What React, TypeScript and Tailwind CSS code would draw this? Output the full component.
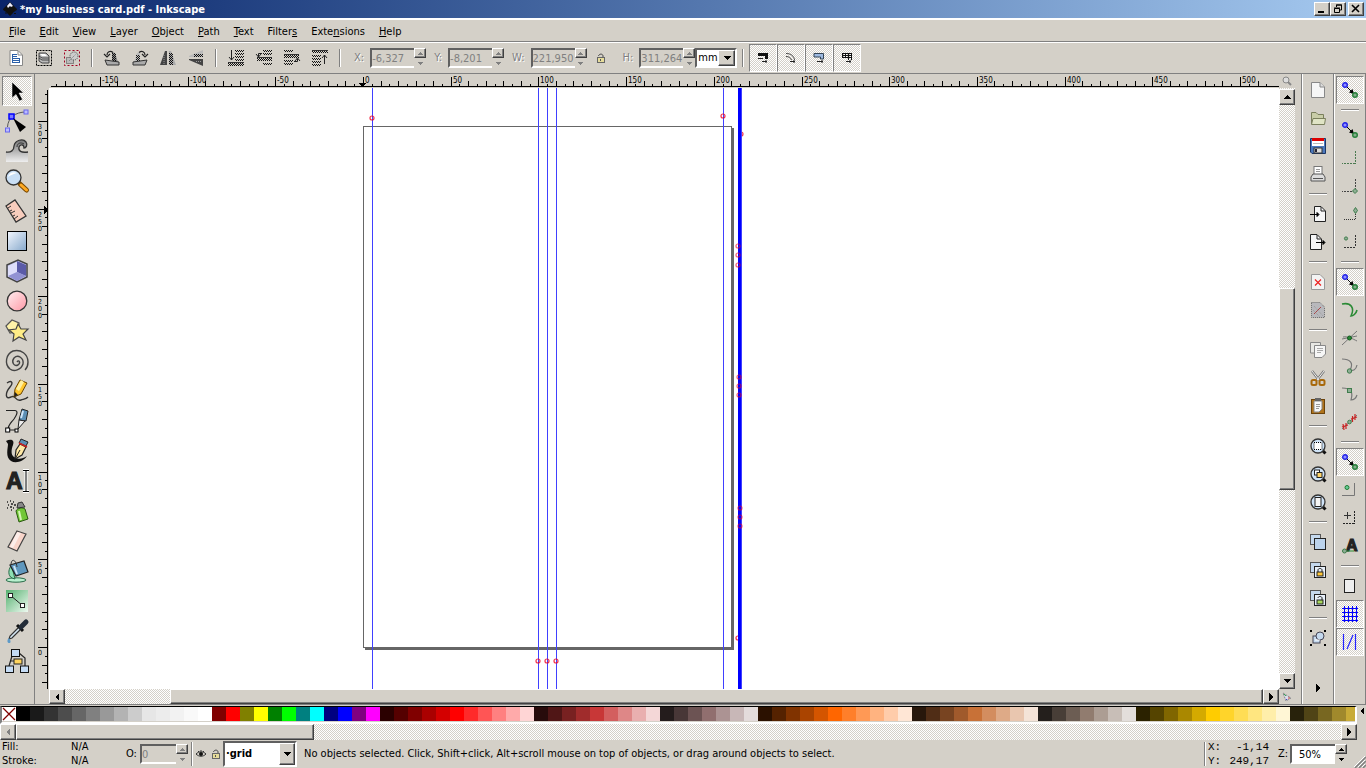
import { type ReactNode } from "react";
import clsx from "clsx";

const dither =
  "bg-[conic-gradient(#fff_25%,#d4d0c8_0_50%,#fff_0_75%,#d4d0c8_0)] bg-[length:2px_2px]";
const raised =
  "border border-t-white border-l-white border-r-[#404040] border-b-[#404040] shadow-[inset_-1px_-1px_#808080] bg-[#d4d0c8]";
const sunken =
  "border-2 border-t-[#606060] border-l-[#606060] border-r-white border-b-white";

const menus = [
  ["", "F", "ile"],
  ["", "E", "dit"],
  ["", "V", "iew"],
  ["", "L", "ayer"],
  ["", "O", "bject"],
  ["", "P", "ath"],
  ["", "T", "ext"],
  ["Filter", "s", ""],
  ["Exte", "n", "sions"],
  ["", "H", "elp"],
];

const palette = (
  "000000 1a1a1a 333333 4d4d4d 666666 808080 999999 b3b3b3 cccccc e6e6e6 ececec f2f2f2 f9f9f9 ffffff " +
  "800000 ff0000 808000 ffff00 008000 00ff00 008080 00ffff 000080 0000ff 800080 ff00ff " +
  "2b0000 550000 800000 aa0000 d40000 ff0000 ff2a2a ff5555 ff8080 ffaaaa ffd5d5 " +
  "280b0b 501616 782121 a02c2c c83737 d35f5f de8787 e9afaf f4d7d7 " +
  "241c1c 483737 6c5353 916f6f ac9393 c8b7b7 e3dbdb " +
  "2b1100 552200 803300 aa4400 d45500 ff6600 ff7f2a ff9955 ffb380 ffccaa ffe6d5 " +
  "28170b 502d16 784421 a05a2c c87137 d38d5f deaa87 e9c6af f4e3d7 " +
  "241f1c 483e37 6c5d53 917c6f ac9d93 c8beb7 e3dedb " +
  "2b2200 554400 806600 aa8800 d4aa00 ffcc00 ffd42a ffdd55 ffe680 ffeeaa fff6d5 " +
  "28220b 504416 786721 a0892c c8ab37"
).split(" ");

type Item = { label: string; icon: ReactNode; on?: boolean } | null;

function Svg({ size = 24, children }: { size?: number; children: ReactNode }) {
  return (
    <svg width={size} height={size} viewBox={`0 0 ${size} ${size}`} fill="none" className="shrink-0 overflow-visible" aria-hidden="true">
      {children}
    </svg>
  );
}

function Arrow({ dir, size = 7, color = "#000" }: { dir: "up" | "down" | "left" | "right"; size?: number; color?: string }) {
  const d = {
    up: "M0 6 L4 2 L8 6Z",
    down: "M0 2 L4 6 L8 2Z",
    left: "M6 0 L2 4 L6 8Z",
    right: "M2 0 L6 4 L2 8Z",
  }[dir];
  return (
    <svg width={size} height={size} viewBox="0 0 8 8" shapeRendering="crispEdges" aria-hidden="true">
      <path d={d} fill={color} />
    </svg>
  );
}

/* ---------- toolbox ---------- */

const toolbox: Item[] = [
  {
    label: "Select",
    on: true,
    icon: <Svg><path d="M7 3 V19 L11 15.500 L14.500 22 L17.500 20.500 L14 14 H18.500Z" fill="#000" stroke="#fff" strokeWidth=".5" /></Svg>,
  },
  {
    label: "Edit nodes",
    icon: (
      <Svg>
        <path d="M2.500 18 C3 9 10 3 21 3" stroke="#555" />
        <rect x="4" y="5" width="5" height="5" fill="#7a7aff" stroke="#00f" strokeWidth="1.500" />
        <rect x="19" y="1" width="4" height="4" fill="#bbf" stroke="#66e" />
        <rect x="0.500" y="19" width="4" height="4" fill="#bbf" stroke="#66e" />
        <path d="M8 9 L21 18 L15 23Z" fill="#000" />
      </Svg>
    ),
  },
  {
    label: "Tweak",
    icon: (
      <Svg>
        <defs>
          <linearGradient id="wave" x1="0" y1="0" x2="0" y2="1"><stop stopColor="#777" /><stop offset="1" stopColor="#eee" /></linearGradient>
        </defs>
        <path d="M1 23 V13 C6 14 9 11 9 7 C10 1 18 -1 21 3 C23 6 21 9 19 9 C19 5 15 5 14 8 C13 12 16 14 23 13 V23Z" fill="url(#wave)" />
        <path d="M1 13 C6 14 9 11 9 7 C10 1 18 -1 21 3 C23 6 21 9 19 9 C19 5 15 5 14 8 C13 12 16 14 23 13" stroke="#333" strokeWidth="1.300" />
        <path d="M12 8 C12 4 16 3 19 5" stroke="#333" />
      </Svg>
    ),
  },
  {
    label: "Zoom",
    icon: (
      <Svg>
        <path d="M15 15 L21.500 21" stroke="#7a4a00" strokeWidth="5" strokeLinecap="round" />
        <path d="M16 16 L21.500 21" stroke="#ffa922" strokeWidth="3" strokeLinecap="round" />
        <circle cx="8.500" cy="8.500" r="7.500" fill="#c9dff5" stroke="#333" strokeWidth="1.300" />
        <path d="M3 8 C4 4 8 2 12 4 C9 5 5 6 3 8Z" fill="#fff" />
      </Svg>
    ),
  },
  {
    label: "Measure",
    icon: (
      <Svg>
        <path d="M1 7 L10 1 L21 17 L11 23Z" fill="#f8cdbd" stroke="#333" strokeWidth="1.300" />
        <path d="M3 9 L6 7 M5 12 L7 11 M6 14 L10 12 M8 17 L10 16 M9 20 L13 17" stroke="#333" />
      </Svg>
    ),
  },
  {
    label: "Rectangle",
    icon: (
      <Svg>
        <defs>
          <linearGradient id="rect" x1="0" y1="0" x2="1" y2="1"><stop stopColor="#f4f8ff" /><stop offset="1" stopColor="#86a8cb" /></linearGradient>
        </defs>
        <rect x="2.500" y="2.500" width="19" height="19" fill="url(#rect)" stroke="#000" />
      </Svg>
    ),
  },
  {
    label: "3D box",
    icon: (
      <Svg>
        <path d="M2 6 L13 1 L22 5 V18 L12 23 L2 18Z" fill="#c5c5f0" stroke="#444" strokeWidth="1.500" />
        <path d="M3 7 L12 3 V13 L3 18Z" fill="#dedefa" />
        <path d="M12 2 L21 6 V17 L12 13Z" fill="#5b5ba8" />
        <path d="M12 13 L21 17 L12 22 L3 17Z" fill="#9292d3" />
      </Svg>
    ),
  },
  {
    label: "Ellipse",
    icon: (
      <Svg>
        <defs>
          <linearGradient id="ell" x1="0" y1="0" x2="1" y2="1"><stop stopColor="#fff0f2" /><stop offset="1" stopColor="#ff98a5" /></linearGradient>
        </defs>
        <circle cx="12" cy="12" r="9.800" fill="url(#ell)" stroke="#333" strokeWidth="1.300" />
      </Svg>
    ),
  },
  {
    label: "Star",
    icon: (
      <Svg>
        <path d="M1 7 L7 1 L14 4 L14 12 L5 14Z" fill="#fff3a8" stroke="#555" strokeWidth="1.200" />
        <path d="M13 5 L16 10 L23 10 L18 15 L21 21 L14 18 L8 22 L9 15 L4 11 L11 10Z" fill="#ffed86" stroke="#444" strokeWidth="1.200" />
      </Svg>
    ),
  },
  {
    label: "Spiral",
    icon: (
      <Svg>
        <path d="M12 13 C14 10 16 14 13 16 C9 18 6 13 9 9 C13 5 19 9 18 15 C16 21 9 23 5 20 C-1 15 1 5 8 2 C16 0 23 5 23 13 C23 18 21 20 20 21" stroke="#444" strokeWidth="1.400" />
      </Svg>
    ),
  },
  {
    label: "Pencil",
    icon: (
      <Svg>
        <path d="M2 4 C6 1 9 3 5 8 C0 14 0 21 6 18 C11 15 10 23 16 21 C19 20 21 20 23 18" stroke="#333" strokeWidth="1.400" />
        <path d="M15 1 L22 4 L16 15 L9 18 L10 10Z" fill="#ffc62e" stroke="#6a4500" />
        <path d="M16 1 L19 3 L14 12 L11 10Z" fill="#fff0a0" />
        <path d="M9 18 L10 13 L13 16Z" fill="#222" />
      </Svg>
    ),
  },
  {
    label: "Bezier",
    icon: (
      <Svg>
        <path d="M1 1.500 H10 C14 2 11 7 9 10 C5 15 3 16 3 21 H11" stroke="#222" strokeWidth="1.200" />
        <path d="M17 0 L23 2 L21 12 L14 11Z" fill="#5c8fb5" stroke="#222" />
        <path d="M18 2 L16 9" stroke="#cfe6fa" strokeWidth="2" />
        <path d="M14 11 L20 12 L13 20Z" fill="#eee" stroke="#222" />
        <rect x=".700" y="19" width="4" height="4" fill="#fff" stroke="#000" />
        <rect x="10" y="20" width="3" height="3" fill="#fff" stroke="#000" />
      </Svg>
    ),
  },
  {
    label: "Calligraphy",
    icon: (
      <Svg>
        <path d="M1 2 C5 0 10 0 8 6 C6 11 6 16 9 18 C14 21 17 20 22 17 C19 22 11 25 6 22 C0 18 3 9 3 5Z" fill="#111" />
        <path d="M16 0 L23 3 L21 7 L14 4Z" fill="#5c8fb5" stroke="#222" />
        <path d="M15 5 L21 8 L17 16 L10 20 L11 11Z" fill="#ffe9a5" stroke="#222" strokeWidth="1.200" />
        <path d="M10 20 L15 11" stroke="#222" />
        <path d="M14 4 L22 8" stroke="#c22" strokeWidth="1.500" />
      </Svg>
    ),
  },
  {
    label: "Text",
    icon: (
      <Svg>
        <text x="1" y="20" fontSize="23" fontWeight="bold" fontFamily="Liberation Sans, sans-serif" fill="#222" stroke="#222" strokeWidth="1.200">A</text>
        <path d="M18 1.500 H24 M21 2 V22 M18 22.500 H24" stroke="#fff" strokeWidth="3" />
        <path d="M18 1.500 H24 M21 2 V22 M18 22.500 H24" stroke="#000" />
      </Svg>
    ),
  },
  {
    label: "Spray",
    icon: (
      <Svg>
        <path d="M11 12 C12 9 18 8 20 10 L23 20 L14 23Z" fill="#72c738" stroke="#2a5a10" />
        <path d="M14 12 L16 21" stroke="#d5f5b5" strokeWidth="2" />
        <path d="M12 9 L13 4 L17 3 L20 8Z" fill="#888" stroke="#333" />
        <path d="M2 3h1M5 2h1M8 3h1M3 6h1M6 5h2M9 6h2M5 8h2M8 9h1M2 9h1M6 11h1" stroke="#222" strokeWidth="1.500" />
      </Svg>
    ),
  },
  {
    label: "Eraser",
    icon: (
      <Svg>
        <path d="M12 2 L21 5 L12 22 L3 18Z" fill="#f9d5ca" stroke="#444" strokeWidth="1.200" />
        <path d="M12 3 L16 4 L8 19 L5 18Z" fill="#fff" opacity=".6" />
      </Svg>
    ),
  },
  {
    label: "Fill bounded areas",
    icon: (
      <Svg>
        <ellipse cx="11" cy="21" rx="10" ry="2.200" fill="#b9f0cf" stroke="#286b48" />
        <path d="M6 7 C3 11 3 17 7 19 L10 20 L8 12Z" fill="#8fe0b4" stroke="#286b48" />
        <path d="M5 6 L19 2 L23 13 L11 17Z" fill="#5f97bd" stroke="#222" strokeWidth="1.200" />
        <path d="M9 7 L12 15" stroke="#cde6f5" strokeWidth="2" />
        <path d="M6 6 C6 -1 11 0 12 8" stroke="#333" />
      </Svg>
    ),
  },
  {
    label: "Gradient",
    icon: (
      <Svg>
        <defs>
          <linearGradient id="grad" x1="0" y1="0" x2="1" y2="1"><stop stopColor="#55b070" /><stop offset="1" stopColor="#eefaf0" /></linearGradient>
        </defs>
        <rect x="1" y="1" width="22" height="22" fill="url(#grad)" />
        <path d="M5 6 L18 17" stroke="#222" />
        <rect x="3.500" y="4.500" width="4" height="4" fill="#fff" stroke="#222" />
        <rect x="15.500" y="14.500" width="4" height="4" fill="#fff" stroke="#222" />
      </Svg>
    ),
  },
  {
    label: "Dropper",
    icon: (
      <Svg>
        <path d="M13 9 L5 17 L4 20 L7 19 L15 11" fill="#d6e8f5" stroke="#333" strokeWidth="1.200" />
        <path d="M12 6 L18 12" stroke="#111" strokeWidth="3" />
        <path d="M16 8 L21 3" stroke="#222c38" strokeWidth="5" strokeLinecap="round" />
        <path d="M4 19 C1 22 3 24 4 24 C6 24 6 22 4 19Z" fill="#5c9ac8" />
      </Svg>
    ),
  },
  {
    label: "Connector",
    icon: (
      <Svg>
        <path d="M7 7 L4 17 M14 4 L20 9 V17 M5 12 L9 12" stroke="#222" strokeWidth="1.200" />
        <rect x="6.500" y=".500" width="8" height="7" fill="#c5dcf5" stroke="#111" />
        <rect x="9" y="10" width="8" height="5" fill="#ffd45e" stroke="#222" />
        <rect x=".500" y="17" width="8" height="6.500" fill="#c5dcf5" stroke="#111" />
        <rect x="15.500" y="17" width="8" height="6.500" fill="#c5dcf5" stroke="#111" />
      </Svg>
    ),
  },
];

/* ---------- tool controls ---------- */

function Hatch({ x, y, w, h = 2 }: { x: number; y: number; w: number; h?: number }) {
  return (
    <>
      {Array.from({ length: h }, (_, i) => (
        <path key={i} d={`M${x} ${y + i + 0.5} H${x + w}`} stroke="#111" strokeDasharray="1 1" strokeDashoffset={i % 2} />
      ))}
    </>
  );
}

const selectIcons: Item[] = [
  {
    label: "Select all",
    icon: (
      <Svg size={16}>
        <path d="M2 .500 H10 L14.500 5 V15.500 H2Z" fill="#fff" stroke="#888" />
        <path d="M10 1 V5 H14" stroke="#888" />
        <path d="M4.500 4.500 H9 M4.500 6.500 H9 M4.500 8.500 H12 M4.500 10.500 H12 M4.500 12.500 H12 M4.500 4 V13 M11.500 8 V13" stroke="#2a5fa8" />
      </Svg>
    ),
  },
  {
    label: "Select all in all layers",
    icon: (
      <Svg size={16}>
        <rect x=".500" y=".500" width="15" height="15" stroke="#000" strokeDasharray="2 1" />
        <path d="M3 3 H10 L13 6 V13 H6 L3 11Z" fill="#bbb" stroke="#444" />
        <path d="M3 6 L6 8 H13 M3 8 L6 10 H13" stroke="#444" />
        <path d="M4 4 H9 L11 6 H6Z" fill="#fff" />
      </Svg>
    ),
  },
  {
    label: "Deselect",
    icon: (
      <Svg size={16}>
        <rect x=".500" y=".500" width="15" height="15" stroke="#a00020" strokeDasharray="2 2" />
        <rect x="2.500" y="7.500" width="7" height="6" fill="#bbb" stroke="#444" strokeDasharray="1 1" />
        <circle cx="10" cy="6" r="4" fill="#ccc" stroke="#444" strokeDasharray="1 1" />
        <path d="M5 11 L12 4" stroke="#777" strokeDasharray="1 1" />
      </Svg>
    ),
  },
];

const flipIcons: Item[] = [
  {
    label: "Rotate 90° CCW",
    icon: (
      <Svg size={16}>
        <path d="M8 2 L11 3 L14 12 H8Z" fill="#888" />
        <Hatch x={8} y={3} w={4} h={9} />
        <path d="M1 10 L15 12 V15 H3Z" fill="#aaa" stroke="#333" />
        <path d="M9 2.500 C6 0 3 2 3 5 M0 4 L3 7 L6 4" stroke="#222" strokeWidth="1.200" />
      </Svg>
    ),
  },
  {
    label: "Rotate 90° CW",
    icon: (
      <Svg size={16}>
        <path d="M8 2 L5 3 L2 12 H8Z" fill="#bbb" />
        <Hatch x={4} y={5} w={4} h={7} />
        <path d="M15 10 L1 12 V15 H13Z" fill="#aaa" stroke="#333" />
        <path d="M7 2.500 C10 0 13 2 13 5 M10 4 L13 7 L16 4" stroke="#222" strokeWidth="1.200" />
      </Svg>
    ),
  },
  {
    label: "Flip horizontal",
    icon: (
      <Svg size={16}>
        <path d="M7 1 V15 H0 L5 1Z" fill="#444" />
        <path d="M9 1 H11 L16 15 H9Z" fill="#aaa" />
        <Hatch x={9} y={3} w={4} h={12} />
        <path d="M4 5 V15" stroke="#999" strokeDasharray="1 1" />
      </Svg>
    ),
  },
  {
    label: "Flip vertical",
    icon: (
      <Svg size={16}>
        <path d="M15 0 V7 H1 V6Z" fill="#bbb" />
        <Hatch x={6} y={4} w={9} h={3} />
        <path d="M15 16 V9 H1 V10Z" fill="#444" />
        <path d="M8 11.500 H14" stroke="#999" strokeDasharray="1 1" />
      </Svg>
    ),
  },
];

const orderIcons: Item[] = [
  {
    label: "Lower to bottom",
    icon: (
      <Svg size={16}>
        <Hatch x={7} y={0} w={9} />
        <Hatch x={7} y={3} w={9} />
        <Hatch x={7} y={6} w={9} />
        <Hatch x={7} y={9} w={9} />
        <Hatch x={0} y={13} w={16} h={3} />
        <path d="M0 12.500 H16" stroke="#333" />
        <path d="M3.500 0 V10 M1 7 L3.500 10 L6 7" stroke="#222" />
      </Svg>
    ),
  },
  {
    label: "Lower",
    icon: (
      <Svg size={16}>
        <Hatch x={7} y={0} w={9} />
        <Hatch x={7} y={3} w={9} />
        <Hatch x={1} y={8} w={15} h={3} />
        <path d="M1 7.500 H16" stroke="#333" />
        <Hatch x={7} y={13} w={9} />
        <path d="M6 3.500 H2.500 V7 M0 4 L2.500 7 L5 4" stroke="#222" />
      </Svg>
    ),
  },
  {
    label: "Raise",
    icon: (
      <Svg size={16}>
        <Hatch x={0} y={0} w={9} />
        <Hatch x={0} y={5} w={15} h={3} />
        <path d="M0 4.500 H15" stroke="#333" />
        <Hatch x={0} y={10} w={9} />
        <Hatch x={0} y={13} w={9} />
        <path d="M10 11.500 H13.500 V9 M11 11 L13.500 8 L16 11" stroke="#222" />
      </Svg>
    ),
  },
  {
    label: "Raise to top",
    icon: (
      <Svg size={16}>
        <path d="M0 .500 H16" stroke="#333" />
        <Hatch x={0} y={1} w={16} h={2} />
        <Hatch x={0} y={5} w={9} />
        <Hatch x={0} y={8} w={9} />
        <Hatch x={0} y={11} w={9} />
        <Hatch x={0} y={14} w={9} />
        <path d="M12.500 14 V5 M10 8 L12.500 5 L15 8" stroke="#222" />
      </Svg>
    ),
  },
];

const affectIcons: Item[] = [
  {
    label: "Scale stroke width",
    on: true,
    icon: (
      <Svg size={10}>
        <path d="M0 1.500 H8.500 V6" stroke="#111" strokeWidth="3" />
        <path d="M0 5.500 H5 M4 8.500 H9 M8 7 V10" stroke="#222" />
      </Svg>
    ),
  },
  {
    label: "Scale rounded corners",
    on: true,
    icon: (
      <Svg size={10}>
        <path d="M0 .500 C5 .500 8 3 8.500 7 M0 3.500 C3 3.500 5 5 5.500 7" stroke="#444" />
        <path d="M4 8.500 H9 M8 7 V10" stroke="#222" />
      </Svg>
    ),
  },
  {
    label: "Move gradients",
    on: true,
    icon: (
      <Svg size={10}>
        <path d="M0 .500 H9.500 V6 H6.500 V4 H0Z" fill="#9db9e0" stroke="#345" />
        <path d="M3 8.500 H9 M8 7 V10" stroke="#222" />
      </Svg>
    ),
  },
  {
    label: "Move patterns",
    on: true,
    icon: (
      <Svg size={10}>
        <path d="M0 .500 H10 M0 4.500 H10 M.500 0 V5 M3.500 0 V5 M6.500 0 V7 M9.500 0 V7 M0 2.500 H10" stroke="#111" />
        <path d="M4 8.500 H9 M8 7 V10" stroke="#222" />
      </Svg>
    ),
  },
];

/* ---------- commands bar ---------- */

const magnifier = (
  <>
    <path d="M12 12 L15.500 15.500" stroke="#111" strokeWidth="3" />
    <circle cx="8" cy="8" r="7" fill="#cfe3f7" stroke="#333" strokeWidth="1.300" />
  </>
);
const sheetPair = (
  <>
    <rect x=".500" y=".500" width="10" height="10" fill="#c5d9ee" stroke="#555" />
    <rect x="4.500" y="4.500" width="11" height="11" fill="#bcd3ec" stroke="#222" />
  </>
);

const commands: Item[] = [
  {
    label: "New",
    icon: (
      <Svg size={16}>
        <path d="M1.500 .500 H10 L14.500 5 V15.500 H1.500Z" fill="#f6f6f6" stroke="#888" />
        <path d="M10 .500 V5 H14.500" fill="#ddd" stroke="#888" />
      </Svg>
    ),
  },
  {
    label: "Open",
    icon: (
      <Svg size={16}>
        <path d="M1.500 14 V2.500 H6 L8 4.500 H13.500 V8" fill="#c9cda8" stroke="#7a7f5d" />
        <path d="M3 8.500 H15.500 L14.500 14.500 H1.500Z" fill="#e0e4c5" stroke="#7a7f5d" />
      </Svg>
    ),
  },
  {
    label: "Save",
    icon: (
      <Svg size={16}>
        <path d="M.500 .500 H15.500 V15.500 H2 L.500 14Z" fill="#4b78bd" stroke="#1c3766" />
        <rect x="2" y="1" width="12" height="7" fill="#fff" />
        <rect x="2" y="0" width="12" height="3" fill="#d00" />
        <path d="M3 5.500 H13" stroke="#bbb" />
        <rect x="4" y="10" width="8" height="5" fill="#ddd" stroke="#333" />
        <rect x="5" y="11" width="2" height="3" fill="#223" />
      </Svg>
    ),
  },
  {
    label: "Print",
    icon: (
      <Svg size={16}>
        <rect x="4" y=".500" width="8" height="9" fill="#fff" stroke="#777" />
        <path d="M6 3.500 H10 M6 5.500 H10" stroke="#999" />
        <path d="M1 11 L3 8 H13 L15 11 V15 H1Z" fill="#ddd" stroke="#555" />
        <path d="M3 12.500 H13" stroke="#555" />
      </Svg>
    ),
  },
  null,
  {
    label: "Import",
    icon: (
      <Svg size={16}>
        <path d="M4.500 .500 H11 L15.500 5 V15.500 H4.500Z" fill="#f6f6f6" stroke="#222" />
        <path d="M11 1 V5 H15" stroke="#222" />
        <path d="M0 8.500 H8 M7 6.500 V10.500 L9 8.500Z" fill="#000" stroke="#000" />
      </Svg>
    ),
  },
  {
    label: "Export",
    icon: (
      <Svg size={16}>
        <path d="M.500 .500 H7 L11.500 5 V15.500 H.500Z" fill="#f6f6f6" stroke="#222" />
        <path d="M7 1 V5 H11" stroke="#222" />
        <path d="M6 8.500 H14 M13 6.500 V10.500 L15 8.500Z" fill="#000" stroke="#000" />
      </Svg>
    ),
  },
  null,
  {
    label: "Undo",
    icon: (
      <Svg size={16}>
        <path d="M1.500 .500 H10 L14.500 5 V15.500 H1.500Z" fill="#f3f3f3" stroke="#999" />
        <path d="M5 5.500 L11 11.500 M11 5.500 L5 11.500" stroke="#e22" strokeWidth="1.200" />
      </Svg>
    ),
  },
  {
    label: "Redo",
    icon: (
      <Svg size={16}>
        <path d="M1.500 .500 H10 L14.500 5 V15.500 H1.500Z" fill="#b8b8bc" stroke="#666" strokeDasharray="1 1" />
        <path d="M4 12 L11 5" stroke="#a44" />
        <path d="M4 4 L13 14 M3 8 L10 15" stroke="#999" strokeDasharray="1 1" />
      </Svg>
    ),
  },
  null,
  {
    label: "Copy",
    icon: (
      <Svg size={16}>
        <path d="M.500 .500 H10.500 V11 H.500Z" fill="#e8e8e4" stroke="#888" />
        <path d="M4.500 3.500 H15.500 V12 L12 15.500 H4.500Z" fill="#f6f6f6" stroke="#888" />
        <path d="M7 6.500 H13 M7 8.500 H13 M7 10.500 H11" stroke="#aaa" />
      </Svg>
    ),
  },
  {
    label: "Cut",
    icon: (
      <Svg size={16}>
        <path d="M2 1 L9 10 M14 1 L7 10" stroke="#777" strokeWidth="2.500" />
        <path d="M2 1 L9 10 M14 1 L7 10" stroke="#eee" />
        <rect x="1.500" y="10" width="5" height="5" rx="1.500" stroke="#a8690c" strokeWidth="2" />
        <rect x="9.500" y="10" width="5" height="5" rx="1.500" stroke="#a8690c" strokeWidth="2" />
      </Svg>
    ),
  },
  {
    label: "Paste",
    icon: (
      <Svg size={16}>
        <rect x="1.500" y="1.500" width="13" height="14" fill="#b0731b" stroke="#6b430b" />
        <path d="M4 3 H12 V11 L9 14 H4Z" fill="#f8f8f8" stroke="#888" />
        <rect x="5" y="0" width="6" height="3" fill="#666" />
        <path d="M6 6.500 H10 M6 8.500 H10 M6 10.500 H9" stroke="#999" />
      </Svg>
    ),
  },
  null,
  {
    label: "Zoom selection",
    icon: <Svg size={16}>{magnifier}<rect x="4" y="4.500" width="8" height="7" fill="#fff" stroke="#000" strokeDasharray="1 1" /></Svg>,
  },
  {
    label: "Zoom drawing",
    icon: (
      <Svg size={16}>
        {magnifier}
        <rect x="4.500" y="4" width="5" height="5" fill="#fff" stroke="#222" />
        <rect x="7" y="6.500" width="5" height="5" fill="#ffd56b" stroke="#222" />
      </Svg>
    ),
  },
  {
    label: "Zoom page",
    icon: <Svg size={16}>{magnifier}<rect x="5" y="3.500" width="6" height="9" fill="#f6f6f6" stroke="#222" /></Svg>,
  },
  null,
  { label: "Duplicate", icon: <Svg size={16}>{sheetPair}</Svg> },
  {
    label: "Create clone",
    icon: (
      <Svg size={16}>
        {sheetPair}
        <rect x="5" y="5" width="10" height="10" fill="#e8f0fa" />
        <path d="M8 10 V8 C8 6 12 6 12 8 V10" stroke="#222" />
        <rect x="7" y="10" width="6" height="4" fill="#ffc83a" stroke="#222" />
      </Svg>
    ),
  },
  {
    label: "Unlink clone",
    icon: (
      <Svg size={16}>
        {sheetPair}
        <rect x="5" y="5" width="10" height="10" fill="#e8f0fa" />
        <path d="M8 8 C8 6 12 6 12 8 V10" stroke="#222" />
        <rect x="7" y="10" width="6" height="4" fill="#a9d95e" stroke="#222" />
      </Svg>
    ),
  },
  null,
  {
    label: "Group",
    icon: (
      <Svg size={16}>
        <rect x="3" y="6" width="7" height="7" fill="#c5d9ee" stroke="#445" />
        <circle cx="10" cy="6" r="4" fill="#c5d9ee" stroke="#445" />
        <path d="M5 10 H10" stroke="#fff" />
        <path d="M0 0h2v2h-2zM14 0h2v2h-2zM0 14h2v2h-2zM14 14h2v2h-2z" fill="#000" />
      </Svg>
    ),
  },
];

/* ---------- snap controls ---------- */

const snapArrow = (
  <Svg size={16}>
    <path d="M4 4 L10 10" stroke="#000" />
    <path d="M12 12 L7 10.500 L10.500 7Z" fill="#000" />
    <circle cx="3" cy="3" r="2.300" fill="#8f8fff" stroke="#2222e8" strokeWidth="1.400" />
    <circle cx="13" cy="13" r="2.300" fill="#84ad8c" stroke="#26803a" strokeWidth="1.400" />
  </Svg>
);
const greenNode = "fill-[#8fae95] stroke-[#3f7d4c]";

const snaps: Item[] = [
  { label: "Enable snapping", on: true, icon: snapArrow },
  null,
  { label: "Snap bounding boxes", icon: snapArrow },
  {
    label: "Snap to edges of a bounding box",
    icon: <Svg size={16}><path d="M13.500 1 V14 M13 13.500 H0" stroke="#4a7a50" strokeDasharray="2 1" /></Svg>,
  },
  {
    label: "Snap bounding box corners",
    icon: (
      <Svg size={16}>
        <path d="M13.500 1 V14 M13 13.500 H0" stroke="#444" strokeDasharray="2 1" />
        <path d="M13 10.500 L15.500 13 L13 15.500 L10.500 13Z" className={greenNode} />
      </Svg>
    ),
  },
  {
    label: "Snap midpoints of bounding box edges",
    icon: (
      <Svg size={16}>
        <path d="M13.500 4 V14 M13 13.500 H1" stroke="#333" strokeDasharray="1 1" />
        <path d="M13.500 1.500 L15.500 4.500 L13.500 7.500 L11.500 4.500Z" className={greenNode} />
      </Svg>
    ),
  },
  {
    label: "Snap centers of bounding boxes",
    icon: (
      <Svg size={16}>
        <path d="M13.500 1 V13 M13 13.500 H1" stroke="#333" strokeDasharray="2 1" />
        <circle cx="4" cy="4.500" r="1.600" className={greenNode} />
      </Svg>
    ),
  },
  null,
  { label: "Snap nodes", on: true, icon: snapArrow },
  {
    label: "Snap to paths",
    icon: <Svg size={16}><path d="M0 2 C9 0 13 6 9 14 C11 14 14 12 15 8" stroke="#2a8a35" strokeWidth="1.600" /></Svg>,
  },
  {
    label: "Snap to path intersections",
    icon: (
      <Svg size={16}>
        <path d="M0 15 L15 1 M0 9 L15 6 M1 7 C6 6 11 9 15 11" stroke="#777" />
        <circle cx="7.500" cy="8" r="2" fill="#2a8a35" stroke="#145a20" />
      </Svg>
    ),
  },
  {
    label: "Snap to cusp nodes",
    icon: (
      <Svg size={16}>
        <path d="M0 1 C8 1 12 5 8 12 C11 13 14 12 15 7" stroke="#777" strokeWidth="1.200" />
        <circle cx="7.500" cy="13" r="2.200" className={greenNode} />
      </Svg>
    ),
  },
  {
    label: "Snap smooth nodes",
    icon: (
      <Svg size={16}>
        <path d="M0 2 C10 2 11 7 9 14 C12 14 14 12 15 9" stroke="#777" strokeWidth="1.200" />
        <rect x="5.500" y="2.500" width="4" height="4" className={greenNode} />
      </Svg>
    ),
  },
  {
    label: "Snap midpoints of line segments",
    icon: (
      <Svg size={16}>
        <path d="M0 15 L15 1" stroke="#777" />
        <path d="M1 10 L2 16 M4 9 L4 15 M0 13 L6 11 M10.500 2 V8 M13 0 V6 M9 5 L15 3" stroke="#c22" strokeWidth="1.200" />
        <circle cx="7.500" cy="8" r="1.800" className={greenNode} />
      </Svg>
    ),
  },
  null,
  { label: "Snap other points", on: true, icon: snapArrow },
  {
    label: "Snap centers of objects",
    icon: (
      <Svg size={16}>
        <path d="M12.500 1 V13.500 H0" stroke="#777" />
        <circle cx="5" cy="5.500" r="2" fill="#6c9" stroke="#1f7b30" />
      </Svg>
    ),
  },
  {
    label: "Snap rotation centers",
    icon: (
      <Svg size={16}>
        <path d="M5.500 2 V9 M2 5.500 H9" stroke="#333" />
        <path d="M12.500 1 V14 M12 13.500 H0" stroke="#222" strokeDasharray="2 1" />
      </Svg>
    ),
  },
  {
    label: "Snap text baselines",
    icon: (
      <Svg size={16}>
        <text x="4" y="13" fontSize="16" fontWeight="bold" fontFamily="Liberation Sans, sans-serif" fill="#222" stroke="#222" strokeWidth="1.200">A</text>
        <path d="M0 13 H12" stroke="#2a8a35" />
        <circle cx="2.500" cy="13" r="2" className={greenNode} />
      </Svg>
    ),
  },
  null,
  {
    label: "Snap to the page border",
    icon: <Svg size={16}><rect x="2.500" y="1.500" width="10" height="13" fill="#eee" stroke="#222" /></Svg>,
  },
  {
    label: "Snap to grids",
    on: true,
    icon: <Svg size={16}><path d="M2.500 0V16M6.500 0V16M10.500 0V16M14.500 0V16M0 2.500H16M0 6.500H16M0 10.500H16M0 14.500H16" stroke="#00f" /></Svg>,
  },
  {
    label: "Snap guides",
    on: true,
    icon: <Svg size={16}><path d="M1.500 0V16M13.500 0V16M5 15L11 1" stroke="#22f" strokeWidth="1.200" /></Svg>,
  },
];

/* ---------- shared widgets ---------- */

function IconButton({ item, className }: { item: NonNullable<Item>; className: string }) {
  return (
    <button
      type="button"
      aria-label={item.label}
      aria-pressed={item.on}
      className={clsx(
        "flex shrink-0 items-center justify-center",
        className,
        item.on && "border border-t-[#808080] border-l-[#808080] border-r-white border-b-white",
        item.on && dither
      )}
    >
      {item.icon}
    </button>
  );
}

function IconRow({ items }: { items: Item[] }) {
  return (
    <div className="flex">
      {items.map((item) => item && <IconButton key={item.label} item={item} className="h-7 w-7" />)}
    </div>
  );
}

function IconColumn({ items }: { items: Item[] }) {
  return (
    <>
      {items.map((item, i) =>
        item ? (
          <IconButton key={item.label} item={item} className="h-7 w-7" />
        ) : (
          <div key={i} className="flex h-3 items-center">
            <div className="h-[2px] w-[18px] border-t border-b border-t-[#808080] border-b-white" />
          </div>
        )
      )}
    </>
  );
}

function Divider() {
  return <div className="mx-[5px] h-[18px] w-[2px] shrink-0 border-r border-l border-l-[#808080] border-r-white" />;
}

function Spinner({ label, disabled }: { label: string; disabled?: boolean }) {
  const color = disabled ? "#808080" : "#000";
  return (
    <div className="flex h-5 w-3 flex-col">
      <button type="button" aria-label={`Increase ${label}`} className={clsx("flex h-[10px] items-center justify-center", raised)}>
        <Arrow dir="up" size={5} color={color} />
      </button>
      <button type="button" aria-label={`Decrease ${label}`} className="flex h-[10px] items-center justify-center">
        <Arrow dir="down" size={5} color={color} />
      </button>
    </div>
  );
}

function NumberField({ label, value }: { label: string; value: string }) {
  return (
    <div className="flex items-center">
      <label htmlFor={`field-${label}`} className="pr-[6px] text-[#808080] [text-shadow:1px_1px_#fff]">
        {label}:
      </label>
      <input
        id={`field-${label}`}
        disabled
        defaultValue={value}
        className={clsx("h-5 w-11 border-r-0 bg-[#d4d0c8] text-[#808080]", sunken)}
      />
      <Spinner label={label} disabled />
    </div>
  );
}

function Combo({ label, value, className, arrowClass }: { label: string; value: string; className: string; arrowClass: string }) {
  return (
    <div className={clsx("flex bg-white", sunken, className)}>
      <select aria-label={label} defaultValue={value} className="min-w-0 flex-1 appearance-none pl-px outline-none">
        <option>{value}</option>
      </select>
      <span className={clsx("pointer-events-none flex items-center justify-center", raised, arrowClass)}>
        <Arrow dir="down" size={8} />
      </span>
    </div>
  );
}

function Lock() {
  return (
    <Svg size={10}>
      <path d="M2.500 3 C3 .500 7 .500 7 3 V5" stroke="#444" />
      <rect x="1.500" y="4.500" width="7" height="5" fill="#e6dc9a" stroke="#666" />
      <path d="M4.500 6 V8" stroke="#555" />
    </Svg>
  );
}

/* ---------- rulers and canvas ---------- */

const MM = 1.754;

function TopRuler() {
  const ticks = Array.from({ length: 139 }, (_, i) => (i - 35) * 5);
  return (
    <svg className="h-full w-full" shapeRendering="crispEdges" aria-label="Horizontal ruler">
      {ticks.map((mm) => {
        const x = Math.round(314 + mm * MM);
        const len = mm % 50 === 0 ? 9 : mm % 10 === 0 ? 5 : 2;
        return (
          <g key={mm}>
            <rect x={x} y={12 - len} width="1" height={len} />
            {mm % 50 === 0 && <text x={x + 2} y="9" fontSize="8">{mm}</text>}
          </g>
        );
      })}
      <rect x="2" y="12" width="100%" height="1" />
      <path d="M309 9 H317 L313 13Z" />
    </svg>
  );
}

function LeftRuler() {
  const ticks = Array.from({ length: 68 }, (_, i) => (i - 4) * 5);
  return (
    <svg className="h-full w-full" shapeRendering="crispEdges" aria-label="Vertical ruler">
      {ticks.map((mm) => {
        const y = Math.round(559 - mm * MM);
        const len = mm % 50 === 0 ? 9 : mm % 10 === 0 ? 5 : 2;
        return (
          <g key={mm}>
            <rect x={12 - len} y={y} width={len} height="1" />
            {mm % 50 === 0 &&
              String(Math.abs(mm)).split("").map((digit, i) => (
                <text key={i} x="3" y={y + 8 + i * 7} fontSize="7">{digit}</text>
              ))}
          </g>
        );
      })}
      <rect x="12" y="2" width="1" height="100%" />
      <path d="M9 118 V126 L13 122Z" />
    </svg>
  );
}

const guides = [323, 489, 498, 507, 674];
const anchors = [
  [323, 30], [674, 28], [489, 573], [498, 573], [507, 573],
  [692, 46], [689, 550],
];
const raisedAnchors = [
  [689, 158], [689, 167], [689, 177],
  [690, 289], [690, 298], [690, 307],
  [691, 420], [691, 429], [691, 438],
];

function Anchors({ points, opacity }: { points: number[][]; opacity: number }) {
  return (
    <g fill="none" stroke="#f00020" strokeWidth="1.200" opacity={opacity}>
      {points.map(([x, y]) => (
        <circle key={`${x}-${y}`} cx={x} cy={y} r="2" />
      ))}
    </g>
  );
}

function Canvas() {
  return (
    <svg className="h-full w-full bg-white" aria-label="Drawing">
      <g fill="#666" shapeRendering="crispEdges">
        <rect x="683" y="40" width="2" height="522" />
        <rect x="316" y="559" width="369" height="3" />
      </g>
      <rect x="314.500" y="38.500" width="368" height="521" fill="#fff" stroke="#666" />
      {guides.map((x) => (
        <rect key={x} x={x} y="0" width="1" height="100%" fill="#4040ff" />
      ))}
      <Anchors points={anchors} opacity={0.8} />
      <rect x="689" y="0" width="3" height="100%" fill="#00f" />
      <rect x="692" y="0" width="1" height="100%" fill="#4040ff" />
      <Anchors points={raisedAnchors} opacity={0.6} />
    </svg>
  );
}

export default function App() {
  return (
    <div className="flex h-screen flex-col overflow-hidden bg-[#d4d0c8] font-['Tahoma','DejaVu_Sans_Condensed',sans-serif] text-[11px] leading-[14px] text-black">
      <header className="flex h-[18px] shrink-0 items-center bg-linear-to-r from-[#0a246a] to-[#a6caf0] px-[2px] text-white">
        <Svg size={16}>
          <path d="M8 1 L15 8 C15 10 12 10 11 12 L8 15 L5 12 C4 10 1 10 1 8Z" fill="#111" />
          <path d="M8 1.500 L11 5 L9 6 L8 5 L6 7 L5 5Z" fill="#eef" />
          <path d="M3 12 H5 M12 12.500 H14" stroke="#111" />
        </Svg>
        <h1 className="ml-[2px] flex-1 pt-px font-bold">*my business card.pdf - Inkscape</h1>
        <button type="button" aria-label="Minimize" className={clsx("flex h-[14px] w-4 items-center justify-center", raised)}>
          <Svg size={10}><path d="M1 8 H7" stroke="#000" strokeWidth="2" /></Svg>
        </button>
        <button type="button" aria-label="Restore" className={clsx("flex h-[14px] w-4 items-center justify-center", raised)}>
          <Svg size={10}><path d="M3.500 3 V1 H8.500 V6 H7 M3 1 H9 M1 4 H7 M1.500 4.500 H6.500 V8.500 H1.500Z" stroke="#000" /></Svg>
        </button>
        <button type="button" aria-label="Close" className={clsx("ml-[2px] flex h-[14px] w-4 items-center justify-center", raised)}>
          <Svg size={10}><path d="M1 1 L8 8 M8 1 L1 8" stroke="#000" strokeWidth="1.600" /></Svg>
        </button>
      </header>

      <nav className="flex h-6 shrink-0 items-center border-b border-b-[#808080] px-[2px] pt-1 shadow-[inset_0_2px_#fff]">
        {menus.map(([before, key, after]) => (
          <button key={before + key + after} type="button" className="px-[7px]">
            {before}<span className="underline">{key}</span>{after}
          </button>
        ))}
      </nav>

      <div className="flex h-8 shrink-0 items-center border-t border-b border-t-white border-b-[#808080] pl-[2px]">
        <IconRow items={selectIcons} />
        <Divider />
        <IconRow items={flipIcons} />
        <Divider />
        <IconRow items={orderIcons} />
        <Divider />
        <div className="ml-2 flex items-center gap-2">
          <NumberField label="X" value="-6,327" />
          <NumberField label="Y" value="-8,201" />
          <div className="flex items-center">
            <NumberField label="W" value="221,950" />
            <button type="button" aria-label="Lock width and height" className="flex w-7 justify-center"><Lock /></button>
          </div>
          <div className="flex items-center">
            <NumberField label="H" value="311,264" />
            <Combo label="Units" value="mm" className="h-5 w-[42px]" arrowClass="w-[17px]" />
          </div>
        </div>
        <Divider />
        <IconRow items={affectIcons} />
      </div>

      <main className="grid min-h-0 flex-1 grid-cols-[35px_14px_minmax(0,1fr)_16px_7px_32px_32px] grid-rows-[14px_minmax(0,1fr)_15px] border-b border-b-[#808080]">
        <aside className="row-span-3 flex min-h-0 flex-col overflow-hidden border-r border-r-[#808080] pt-[2px] pl-[2px]">
          {toolbox.map((item) => item && <IconButton key={item.label} item={item} className="h-[30px] w-[30px]" />)}
        </aside>

        <div className="col-start-3 row-start-1"><TopRuler /></div>
        <div className="col-start-2 row-start-2"><LeftRuler /></div>
        <div className="col-start-3 row-start-2"><Canvas /></div>

        <button type="button" aria-label="Zoom with window" className="col-start-4 row-start-1 flex items-center justify-center">
          <Svg size={10}><circle cx="4" cy="4" r="3" fill="#ddd" stroke="#888" /><path d="M6 6 L9 9" stroke="#888" strokeWidth="2" /></Svg>
        </button>

        <div className={clsx("col-start-4 row-start-2 flex flex-col pt-px", dither)}>
          <button type="button" aria-label="Scroll up" className={clsx("flex h-4 items-center justify-center", raised)}><Arrow dir="up" size={8} /></button>
          <div className="flex-184" />
          <div className={clsx("flex-200", raised)} />
          <div className="flex-184" />
          <button type="button" aria-label="Scroll down" className={clsx("flex h-4 items-center justify-center", raised)}><Arrow dir="down" size={8} /></button>
        </div>

        <div className={clsx("col-start-3 row-start-3 flex", dither)}>
          <button type="button" aria-label="Scroll left" className={clsx("flex w-4 items-center justify-center", raised)}><Arrow dir="left" size={8} /></button>
          <div className="flex-105" />
          <div className={clsx("flex-1092", raised)} />
          <button type="button" aria-label="Scroll right" className={clsx("flex w-4 items-center justify-center", raised)}><Arrow dir="right" size={8} /></button>
        </div>

        <button type="button" aria-label="Color management" className="col-start-4 row-start-3 flex items-center justify-center">
          <Svg size={10}>
            <path d="M1 1 L9 6 L4 9Z" stroke="#888" strokeDasharray="2 1" fill="#dde" />
            <path d="M2 2 L4 4" stroke="#3a5" /><path d="M6 6 L8 6" stroke="#c44" /><path d="M4 7 L5 8" stroke="#44c" />
          </Svg>
        </button>

        <aside className="col-start-6 row-span-3 row-start-1 flex min-h-0 flex-col items-center overflow-hidden border-r border-l border-r-[#808080] border-l-white pt-[2px] shadow-[-1px_0_#808080]">
          <IconColumn items={commands} />
          <button type="button" aria-label="More commands" className="mt-auto mb-3"><Arrow dir="right" size={8} /></button>
        </aside>
        <aside className="col-start-7 row-span-3 row-start-1 flex min-h-0 flex-col items-center overflow-hidden border-r border-l border-r-[#808080] border-l-white pt-[2px]">
          <IconColumn items={snaps} />
        </aside>
      </main>

      <div className="flex h-[19px] shrink-0 pt-px">
        <div className="flex min-w-0 flex-1 overflow-hidden border-t border-r-2 border-b-2 border-l-2 border-t-black border-r-white border-b-white border-l-[#808080]">
          <button type="button" aria-label="None" className="h-[14px] w-[14px] shrink-0 bg-white">
            <Svg size={14}><path d="M1 1 L13 13 M13 1 L1 13" stroke="#800000" strokeWidth="1.300" /></Svg>
          </button>
          {palette.map((hex, i) => (
            <button key={i} type="button" aria-label={`#${hex}`} className="h-[14px] w-[14px] shrink-0" style={{ backgroundColor: `#${hex}` }} />
          ))}
        </div>
        <button type="button" aria-label="Palette menu" className="flex w-[9px] justify-center pt-px"><Arrow dir="left" size={8} /></button>
      </div>

      <div className={clsx("mr-[9px] flex h-4 shrink-0", dither)}>
        <button type="button" aria-label="Scroll palette left" className={clsx("flex w-4 items-center justify-center", raised)}><Arrow dir="left" size={8} color="#808080" /></button>
        <div className={clsx("flex-296", raised)} />
        <div className="flex-1029" />
        <button type="button" aria-label="Scroll palette right" className={clsx("flex w-4 items-center justify-center", raised)}><Arrow dir="right" size={8} /></button>
      </div>

      <footer className="flex h-7 shrink-0 items-center">
        <dl className="grid w-[126px] grid-cols-[69px_1fr] pl-[2px]">
          <dt>Fill:</dt><dd>N/A</dd>
          <dt>Stroke:</dt><dd>N/A</dd>
        </dl>
        <label htmlFor="opacity" className="w-[14px]">O:</label>
        <input id="opacity" disabled defaultValue="0" className={clsx("h-5 w-9 border-r-0 bg-[#d4d0c8] text-[#808080]", sunken)} />
        <Spinner label="opacity" disabled />
        <div className="ml-[3px] h-6 w-[2px] border-r border-l border-l-[#808080] border-r-white" />
        <button type="button" aria-label="Toggle layer visibility" className="ml-[3px]">
          <Svg size={10}>
            <path d="M0 5 C3 2 7 2 10 5 C7 8 3 8 0 5Z" stroke="#333" />
            <circle cx="5" cy="5" r="2" fill="#111" />
            <path d="M2 2 L3 3 M5 1 V2 M8 2 L7 3" stroke="#333" />
          </Svg>
        </button>
        <button type="button" aria-label="Lock layer" className="mr-[2px] ml-[5px]"><Lock /></button>
        <Combo label="Layer" value="·grid" className="h-[26px] w-[74px] font-bold" arrowClass="w-4" />
        <p className="ml-[7px] min-w-0 flex-1 truncate">
          No objects selected. Click, Shift+click, Alt+scroll mouse on top of objects, or drag around objects to select.
        </p>
        <div className="h-6 w-[2px] border-r border-l border-l-[#808080] border-r-white" />
        <dl className="ml-[2px] grid w-[70px] grid-cols-[14px_47px] font-['Liberation_Mono',monospace]">
          <dt>X:</dt><dd className="text-right">-1,14</dd>
          <dt>Y:</dt><dd className="text-right">249,17</dd>
        </dl>
        <label htmlFor="zoom" className="w-3">Z:</label>
        <input id="zoom" defaultValue="50%" className={clsx("h-5 w-[45px] border-r-0 bg-white pl-[7px]", sunken)} />
        <Spinner label="zoom" />
        <div className="flex h-full w-[19px] items-end justify-end">
          <Svg size={12}>
            <path d="M1 12 L12 1 M5 12 L12 5 M9 12 L12 9" stroke="#808080" strokeWidth="1.500" />
            <path d="M0 11 L11 0 M4 11 L11 4 M8 11 L11 8" stroke="#fff" />
          </Svg>
        </div>
      </footer>
    </div>
  );
}
